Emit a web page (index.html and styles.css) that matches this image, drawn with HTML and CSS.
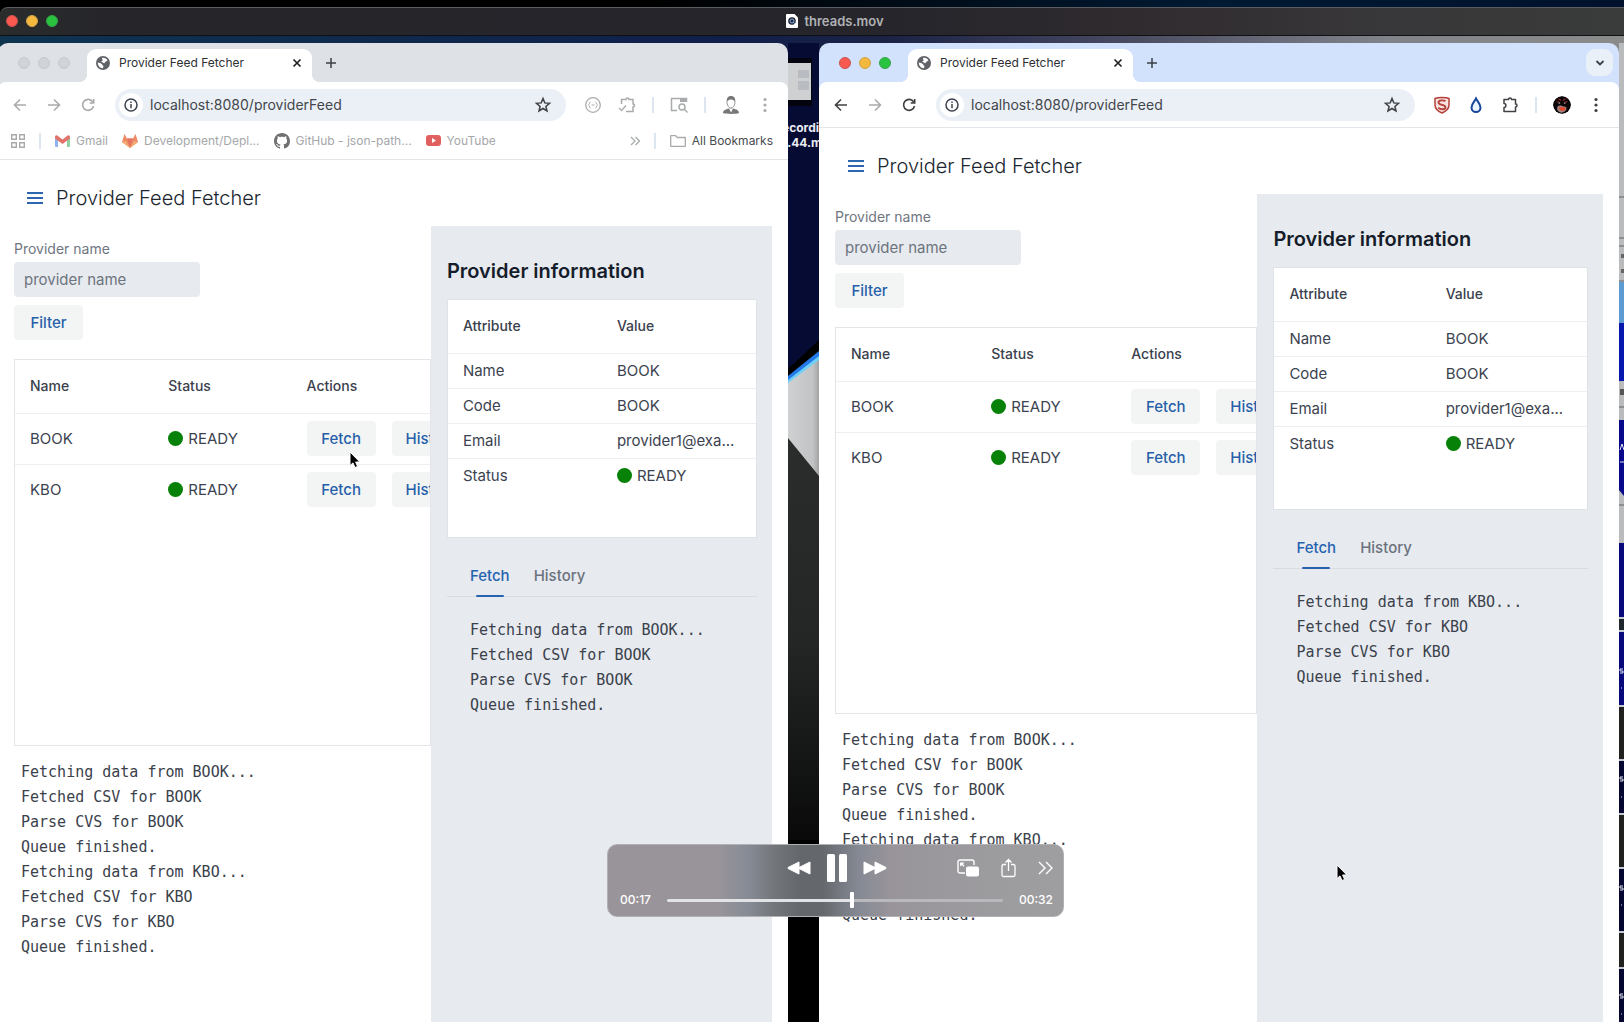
FILE: index.html
```html
<!DOCTYPE html>
<html lang="en">
<head>
<meta charset="utf-8">
<title>threads.mov</title>
<link rel="stylesheet" href="styles.css">
</head>
<body>
<svg class="defs" aria-hidden="true">
  <symbol id="i-back" viewBox="0 0 18 18"><path d="M15 9H4M9 3.500 3.500 9 9 14.500" fill="none" stroke="currentColor" stroke-width="1.600"/></symbol>
  <symbol id="i-fwd" viewBox="0 0 18 18"><path d="M3 9h11M9 3.500 14.500 9 9 14.500" fill="none" stroke="currentColor" stroke-width="1.600"/></symbol>
  <symbol id="i-reload" viewBox="0 0 18 18"><path d="M13.800 6A5.500 5.500 0 1 0 14.500 10M14.700 3v4h-4" fill="none" stroke="currentColor" stroke-width="1.600"/></symbol>
  <symbol id="i-info" viewBox="0 0 18 18"><circle cx="9" cy="9" r="6" fill="none" stroke="currentColor" stroke-width="1.500"/><path d="M9 8v4.200M9 5.500v1.500" stroke="currentColor" stroke-width="1.500"/></symbol>
  <symbol id="i-star" viewBox="0 0 18 18"><path d="m9 2.500 1.800 4.400 4.700.4-3.600 3.100 1.100 4.600-4-2.500-4 2.500 1.100-4.600L2.500 7.300l4.700-.4z" fill="none" stroke="currentColor" stroke-width="1.500"/></symbol>
  <symbol id="i-globe" viewBox="0 0 16 16"><circle cx="8" cy="8" r="8" fill="#5f6368"/><path d="M2 7.500c2 .2 3 .8 4.500 1.500 1 .6.800 1.700 1.800 2.200.5.600 0 1.800-.5 2.800C4.500 14 2 11 2 7.500zM7 2.200c2.500-.5 5 .7 6.200 2.800-1.700 0-1.200 1.500-2.700 1.700-.5.800-.2 1.800-1.500 1.600-1-.4-1.300-1.400-2.600-1.300C5.500 6.500 6.500 5.500 7.500 5 8.500 4.500 6 3.500 7 2.200z" fill="#fff"/></symbol>
  <symbol id="i-close" viewBox="0 0 12 12"><path d="m2.500 2.500 7 7m0-7-7 7" stroke="currentColor" stroke-width="1.700"/></symbol>
  <symbol id="i-plus" viewBox="0 0 12 12"><path d="M6 1v10M1 6h10" stroke="currentColor" stroke-width="1.500"/></symbol>
  <symbol id="i-puzzle" viewBox="0 0 18 18"><path d="M3 3.500h4.500c0-2 3-2 3 0h4V8c2 0 2 3 0 3v4.500H3v-4c2.500 0 2.500-4 0-4z" fill="none" stroke="currentColor" stroke-width="1.500" stroke-linejoin="round"/></symbol>
  <symbol id="i-puzzle-check" viewBox="0 0 18 18"><path d="M3.500 8V3.500H8c0-2 3-2 3 0h4V8c2 0 2 3 0 3v4.500H8" fill="none" stroke="currentColor" stroke-width="1.500"/><path d="m1 12 2.500 2.500L8 9.500" fill="none" stroke="currentColor" stroke-width="1.400"/></symbol>
  <symbol id="i-menu" viewBox="0 0 18 18"><g fill="currentColor"><circle cx="9" cy="3.500" r="1.600"/><circle cx="9" cy="9" r="1.600"/><circle cx="9" cy="14.500" r="1.600"/></g></symbol>
  <symbol id="i-burger" viewBox="0 0 16 16"><path d="M0 3h16M0 8h16M0 13h16" stroke="currentColor" stroke-width="2"/></symbol>
  <symbol id="i-cursor" viewBox="0 0 12 18"><path d="M1 1v13.500l3-2.600 2 4.600 2.600-1.100-2-4.400h4.200z" fill="#000" stroke="#fff" stroke-width="1"/></symbol>
</svg>

<header class="titlebar">
  <div class="lights"><i class="dot red"></i><i class="dot yellow"></i><i class="dot green"></i></div>
  <div class="file">
    <svg width="12" height="14" viewBox="0 0 12 14"><path d="M1 0h7.500L12 3.500V13a1 1 0 0 1-1 1H1a1 1 0 0 1-1-1V1a1 1 0 0 1 1-1z" fill="#fff"/><circle cx="6" cy="7" r="3.800" fill="#223"/><circle cx="6" cy="7" r="2" fill="none" stroke="#7fb0e6"/><path d="m7 8 2 2" stroke="#7fb0e6"/></svg>
    <span>threads.mov</span>
  </div>
</header>

<main class="desktop">
  <section class="window left inactive">
    <div class="tabstrip">
      <div class="lights"><i class="dot"></i><i class="dot"></i><i class="dot"></i></div>
      <div class="tab"><svg class="fav"><use href="#i-globe"/></svg><span class="tab-title">Provider Feed Fetcher</span><button class="icon-btn" aria-label="Close tab"><svg width="12" height="12"><use href="#i-close"/></svg></button></div>
      <button class="icon-btn new-tab" aria-label="New tab"><svg width="12" height="12"><use href="#i-plus"/></svg></button>
    </div>
    <div class="chrome">
      <div class="toolbar">
        <button class="icon-btn dim" aria-label="Back"><svg class="ic"><use href="#i-back"/></svg></button>
        <button class="icon-btn dim" aria-label="Forward"><svg class="ic"><use href="#i-fwd"/></svg></button>
        <button class="icon-btn dim" aria-label="Reload"><svg class="ic"><use href="#i-reload"/></svg></button>
        <div class="omnibox"><span class="info"><svg class="ic"><use href="#i-info"/></svg></span><input class="url" aria-label="Address" value="localhost:8080/providerFeed"><button class="icon-btn" aria-label="Bookmark"><svg class="ic"><use href="#i-star"/></svg></button></div>
        <button class="icon-btn dim" aria-label="JSON viewer"><svg class="ic" viewBox="0 0 18 18"><circle cx="9" cy="9" r="7.300" fill="none" stroke="currentColor" stroke-width="1.300"/><path d="M6.500 6c-1.500 0-.5 2.500-2 3 1.500.5.500 3 2 3M11.500 6c1.500 0 .5 2.500 2 3-1.500.5-.5 3-2 3M7.500 9h3" fill="none" stroke="currentColor"/></svg></button>
        <button class="icon-btn dim" aria-label="Extensions"><svg class="ic"><use href="#i-puzzle-check"/></svg></button>
        <i class="divider"></i>
        <button class="icon-btn dim" aria-label="Search tabs"><svg class="ic" viewBox="0 0 18 18"><path d="M7 14.500H1.500v-12h15V6" fill="none" stroke="currentColor" stroke-width="1.500"/><path d="M10 2h7v4h-7z" fill="currentColor"/><circle cx="12" cy="11" r="3" fill="none" stroke="currentColor" stroke-width="1.500"/><path d="m14 13 3.500 3.500" stroke="currentColor" stroke-width="1.500"/></svg></button>
        <i class="divider"></i>
        <button class="icon-btn" aria-label="Profile"><svg class="ic" viewBox="0 0 18 18"><path d="M1 17c0-3 3-3.500 6-4.500h4c3 1 6 1.500 6 4.500-3 1.200-13 1.200-16 0z" fill="#777"/><path d="m7 12.500 2 4 2-4z" fill="#fff"/><path d="M5 5.500c0 3.500 1.500 6.500 4 6.500s4-3 4-6.500" fill="#fff" stroke="#999"/><path d="M4.800 6.500C4.500 2 6 0 9 0s4.700 2 4.200 6.500C12.500 4 11 4 9 3.500 7 4 5.500 4 4.800 6.500z" fill="#777"/></svg></button>
        <button class="icon-btn dim" aria-label="Menu"><svg class="ic"><use href="#i-menu"/></svg></button>
      </div>
      <nav class="bookmarks">
        <svg class="apps" width="14" height="14" viewBox="0 0 14 14"><path d="M.7.700h4.600v4.600H.7zM8.700.700h4.600v4.600H8.700zM.7 8.700h4.600v4.600H.7zM8.700 8.700h4.600v4.600H8.700z" fill="none" stroke="#aaa" stroke-width="1.400"/></svg>
        <i class="divider"></i>
        <a href="#"><svg width="15" height="12" viewBox="0 0 15 12"><path d="M0 2v9a1 1 0 0 0 1 1h2V5z" fill="#8fb4ee"/><path d="M15 2v9a1 1 0 0 1-1 1h-2V5z" fill="#8fd0a0"/><path d="M0 2C0 0 2 0 3 1l4.500 3.500L12 1c1-1 3-1 3 1v1.500L7.500 9 0 3.500z" fill="#e2736b"/></svg>Gmail</a>
        <a href="#"><svg width="16" height="14" viewBox="0 0 16 14"><path d="M2.500 0 5 4.500h6L13.500 0 16 8l-8 6-8-6z" fill="#ee8a68"/><path d="M5 4.500h6L8 14z" fill="#e57560"/><path d="m0 8 8 6-4-7z" fill="#f5ad70"/><path d="m16 8-8 6 4-7z" fill="#f5ad70"/></svg>Development/Depl...</a>
        <a href="#"><svg width="16" height="16" viewBox="0 0 16 16"><path fill="#6f6f72" d="M8 0C3.580 0 0 3.580 0 8c0 3.540 2.290 6.530 5.470 7.590.4.070.55-.17.55-.38 0-.19-.01-.82-.01-1.490-2.010.37-2.530-.49-2.690-.94-.09-.23-.48-.94-.82-1.130-.28-.15-.68-.52-.01-.53.63-.01 1.080.58 1.230.82.72 1.210 1.870.87 2.330.66.07-.52.28-.87.51-1.070-1.780-.2-3.640-.89-3.640-3.950 0-.87.31-1.590.82-2.150-.08-.2-.36-1.020.08-2.120 0 0 .67-.21 2.200.82.64-.18 1.320-.27 2-.27s1.360.09 2 .27c1.530-1.040 2.200-.82 2.200-.82.44 1.100.16 1.920.08 2.120.51.56.82 1.270.82 2.150 0 3.070-1.870 3.750-3.650 3.950.29.25.54.73.54 1.480 0 1.070-.01 1.930-.01 2.200 0 .21.15.46.55.38A8.010 8.010 0 0 0 16 8c0-4.420-3.580-8-8-8z"/></svg>GitHub - json-path...</a>
        <a href="#"><svg width="15" height="11" viewBox="0 0 15 11"><rect width="15" height="11" rx="3" fill="#e0605f"/><path d="m6 3 4 2.500L6 8z" fill="#fff"/></svg>YouTube</a>
        <button class="icon-btn dim more" aria-label="More bookmarks"><svg width="10" height="10" viewBox="0 0 10 10"><path d="m1 1 4 4-4 4M5.500 1l4 4-4 4" fill="none" stroke="currentColor" stroke-width="1.300"/></svg></button>
        <i class="divider"></i>
        <a href="#" class="all"><svg width="16" height="12" viewBox="0 0 16 12"><path d="M.7 11.300V.7h5l1.600 1.800h8v8.800z" fill="none" stroke="#aaa" stroke-width="1.300" stroke-linejoin="round"/></svg>All Bookmarks</a>
      </nav>
    </div>
    <div class="app">
      <div class="app-head"><button class="icon-btn burger" aria-label="Toggle menu"><svg width="16" height="16"><use href="#i-burger"/></svg></button><h1>Provider Feed Fetcher</h1></div>
      <div class="split">
        <div class="providers">
          <label for="name-a">Provider name</label>
          <input id="name-a" class="field" placeholder="provider name">
          <button class="btn">Filter</button>
          <div class="grid-box">
            <table>
              <thead><tr><th>Name</th><th>Status</th><th>Actions</th></tr></thead>
              <tbody>
                <tr><td>BOOK</td><td><span class="status">READY</span></td><td><div class="actions"><button class="btn">Fetch</button><button class="btn">History</button></div></td></tr>
                <tr><td>KBO</td><td><span class="status">READY</span></td><td><div class="actions"><button class="btn">Fetch</button><button class="btn">History</button></div></td></tr>
              </tbody>
            </table>
          </div>
          <pre class="log">Fetching data from BOOK...
Fetched CSV for BOOK
Parse CVS for BOOK
Queue finished.
Fetching data from KBO...
Fetched CSV for KBO
Parse CVS for KBO
Queue finished.</pre>
        </div>
        <aside class="panel">
          <h2>Provider information</h2>
          <div class="info-box">
            <table>
              <thead><tr><th>Attribute</th><th>Value</th></tr></thead>
              <tbody>
                <tr><td>Name</td><td>BOOK</td></tr>
                <tr><td>Code</td><td>BOOK</td></tr>
                <tr><td>Email</td><td>provider1@exa...</td></tr>
                <tr><td>Status</td><td><span class="status">READY</span></td></tr>
              </tbody>
            </table>
          </div>
          <div class="tabs" role="tablist"><button role="tab" class="tab-btn selected" aria-selected="true">Fetch</button><button role="tab" class="tab-btn" aria-selected="false">History</button></div>
          <pre class="log">Fetching data from BOOK...
Fetched CSV for BOOK
Parse CVS for BOOK
Queue finished.</pre>
        </aside>
      </div>
    </div>
  </section>

  <div class="gap">
    <svg class="wallpaper" width="31" height="979" viewBox="0 43 31 979">
      <defs>
        <linearGradient id="g-dark" x1="0" y1="438" x2="0" y2="850" gradientUnits="userSpaceOnUse"><stop offset="0" stop-color="#2b2c2c"/><stop offset=".5" stop-color="#242626"/><stop offset="1" stop-color="#080808"/></linearGradient>
        <linearGradient id="g-grey"><stop offset="0" stop-color="#cfd0d2"/><stop offset=".8" stop-color="#c2c3c4"/><stop offset="1" stop-color="#a2a3a5"/></linearGradient>
      </defs>
      <rect y="43" width="31" height="979" fill="#060b33"/>
      <rect y="58" width="24" height="48" fill="#03040e"/>
      <rect y="63" width="23" height="37" fill="#cfd0d1"/>
      <path d="M10 70h11v8H10zM10 81h11v9H10z" fill="#b9bdc2"/>
      <path d="M0 369 31 340V380H0z" fill="#000"/>
      <path d="M0 376 31 351V370L0 392z" fill="#2479e8"/>
      <path d="M0 380 31 356V370L0 392z" fill="#6fd0fa"/>
      <path d="M0 383 31 360V480H0z" fill="url(#g-grey)"/>
      <path d="M0 438 31 476V840H0z" fill="url(#g-dark)"/>
      <rect y="840" width="31" height="182" fill="#000"/>
    </svg>
    <span class="file-label">ecording<br>1.44.mov</span>
  </div>

  <section class="window right">
    <div class="tabstrip">
      <div class="lights"><i class="dot red"></i><i class="dot yellow"></i><i class="dot green"></i></div>
      <div class="tab"><svg class="fav"><use href="#i-globe"/></svg><span class="tab-title">Provider Feed Fetcher</span><button class="icon-btn" aria-label="Close tab"><svg width="12" height="12"><use href="#i-close"/></svg></button></div>
      <button class="icon-btn new-tab" aria-label="New tab"><svg width="12" height="12"><use href="#i-plus"/></svg></button>
      <button class="icon-btn tab-search" aria-label="Search tabs"><svg width="10" height="10" viewBox="0 0 10 10"><path d="m1.500 3 3.500 3.500L8.500 3" fill="none" stroke="currentColor" stroke-width="1.800"/></svg></button>
    </div>
    <div class="chrome">
      <div class="toolbar">
        <button class="icon-btn" aria-label="Back"><svg class="ic"><use href="#i-back"/></svg></button>
        <button class="icon-btn dim" aria-label="Forward"><svg class="ic"><use href="#i-fwd"/></svg></button>
        <button class="icon-btn" aria-label="Reload"><svg class="ic"><use href="#i-reload"/></svg></button>
        <div class="omnibox"><span class="info"><svg class="ic"><use href="#i-info"/></svg></span><input class="url" aria-label="Address" value="localhost:8080/providerFeed"><button class="icon-btn" aria-label="Bookmark"><svg class="ic"><use href="#i-star"/></svg></button></div>
        <button class="icon-btn" aria-label="Shield"><svg class="ic" viewBox="0 0 18 18"><path d="M2 2.500C5 1 13 1 16 2.500V9c0 4-3.500 6.500-7 8-3.500-1.500-7-4-7-8z" fill="#f6e3e0" stroke="#b5413b" stroke-width="1.500"/><path d="M12.500 5.200c-2-1.300-7-1.200-7 1.300 0 3 7 1.800 7 4.700 0 2.500-4.500 2.600-7.200.6" fill="none" stroke="#b5413b" stroke-width="1.900"/></svg></button>
        <button class="icon-btn" aria-label="Drop"><svg class="ic" viewBox="0 0 18 18"><path d="M9 2.500c1.500 3 4.500 5.500 4.500 9a4.500 4.500 0 0 1-9 0c0-3.500 3-6 4.500-9z" fill="#eaf6ff" stroke="#17479b" stroke-width="2"/></svg></button>
        <button class="icon-btn" aria-label="Extensions"><svg class="ic"><use href="#i-puzzle"/></svg></button>
        <i class="divider"></i>
        <button class="icon-btn" aria-label="Profile"><svg class="ic avatar" viewBox="0 0 20 20"><circle cx="10" cy="10" r="10" fill="#0b0708"/><path d="m4 6 4 1.500M16 6l-4 1.500M6 3l3 2M14 3l-3 2" stroke="#8d2a28" stroke-width="1.200"/><circle cx="7" cy="8" r="1" fill="#777"/><circle cx="13" cy="8" r="1" fill="#777"/><path d="M4.500 14c0-3.500 3-4 5.500-3s5.500 0 5 3-3 4.500-5.500 4.500-5-2-5-4.500z" fill="#9c8583"/><path d="M6.500 13c2-1.500 5 0 7.500-.5 0 3-2 4.500-4 4s-3.500-1.500-3.500-3.500z" fill="#e2492f"/></svg></button>
        <button class="icon-btn" aria-label="Menu"><svg class="ic"><use href="#i-menu"/></svg></button>
      </div>
    </div>
    <div class="app">
      <div class="app-head"><button class="icon-btn burger" aria-label="Toggle menu"><svg width="16" height="16"><use href="#i-burger"/></svg></button><h1>Provider Feed Fetcher</h1></div>
      <div class="split">
        <div class="providers">
          <label for="name-b">Provider name</label>
          <input id="name-b" class="field" placeholder="provider name">
          <button class="btn">Filter</button>
          <div class="grid-box">
            <table>
              <thead><tr><th>Name</th><th>Status</th><th>Actions</th></tr></thead>
              <tbody>
                <tr><td>BOOK</td><td><span class="status">READY</span></td><td><div class="actions"><button class="btn">Fetch</button><button class="btn">History</button></div></td></tr>
                <tr><td>KBO</td><td><span class="status">READY</span></td><td><div class="actions"><button class="btn">Fetch</button><button class="btn">History</button></div></td></tr>
              </tbody>
            </table>
          </div>
          <pre class="log">Fetching data from BOOK...
Fetched CSV for BOOK
Parse CVS for BOOK
Queue finished.
Fetching data from KBO...
Fetched CSV for KBO
Parse CVS for KBO
Queue finished.</pre>
        </div>
        <aside class="panel">
          <h2>Provider information</h2>
          <div class="info-box">
            <table>
              <thead><tr><th>Attribute</th><th>Value</th></tr></thead>
              <tbody>
                <tr><td>Name</td><td>BOOK</td></tr>
                <tr><td>Code</td><td>BOOK</td></tr>
                <tr><td>Email</td><td>provider1@exa...</td></tr>
                <tr><td>Status</td><td><span class="status">READY</span></td></tr>
              </tbody>
            </table>
          </div>
          <div class="tabs" role="tablist"><button role="tab" class="tab-btn selected" aria-selected="true">Fetch</button><button role="tab" class="tab-btn" aria-selected="false">History</button></div>
          <pre class="log">Fetching data from KBO...
Fetched CSV for KBO
Parse CVS for KBO
Queue finished.</pre>
        </aside>
      </div>
    </div>
  </section>

  <svg class="edge" width="5" height="979" viewBox="0 43 5 979">
    <rect y="43" width="5" height="979" fill="#b9bbbc"/>
    <path d="M0 197h5M0 238h5M0 246h5M0 281h5M0 407h5M0 505h5" stroke="#8c8e90" stroke-width="2"/>
    <path d="M2 256h3M2 271h3" stroke="#666" stroke-width="4"/>
    <rect y="282" width="5" height="41" fill="#5f9bd3"/>
    <rect y="323" width="5" height="58" fill="#0517ad"/>
    <path d="M1 392h4" stroke="#555" stroke-width="6"/>
    <path d="M0 420h5v76L0 490z" fill="#07088a"/>
    <path d="M1 450l2-6 2 6M1 462h4M2 560l2-3v9" fill="none" stroke="#dfe3ee"/>
    <rect y="543" width="5" height="479" fill="#07087a"/>
    <rect y="617" width="5" height="15" fill="#20262e"/>
    <rect y="705" width="5" height="54" fill="#20211f"/>
    <rect y="759" width="5" height="263" fill="#05062f"/>
    <rect y="813" width="5" height="54" fill="#20211f"/>
    <rect y="932" width="5" height="35" fill="#20211f"/>
    <path d="M0 618h5M0 631h5M0 706h5M0 760h5M0 814h5M0 868h5M0 932h5M0 968h5" stroke="#c3c9d2" stroke-width="2"/>
    <path d="M4 669H1v2h3v2H1M4 777H1v2h3v2H1M4 886H1v2h3v2H1M4 994H1v2h3v2H1M2 688h1M2 797h1M2 905h1M2 1014h1" fill="none" stroke="#dfe3ee"/>
  </svg>

  <svg class="cursor one" width="12" height="18"><use href="#i-cursor"/></svg>
  <svg class="cursor two" width="12" height="18"><use href="#i-cursor"/></svg>

  <div class="player">
    <div class="controls">
      <div class="transport">
        <button class="icon-btn" aria-label="Rewind"><svg width="24" height="14" viewBox="0 0 24 14"><path d="M12 1v12L1 7.500v-1zM23 1v12L12 7.500v-1z" fill="#fff" stroke="#fff" stroke-linejoin="round"/></svg></button>
        <button class="icon-btn" aria-label="Pause"><svg width="20" height="28" viewBox="0 0 20 28"><rect width="8" height="28" rx="1.500" fill="#fff"/><rect x="12" width="8" height="28" rx="1.500" fill="#fff"/></svg></button>
        <button class="icon-btn" aria-label="Fast forward"><svg width="24" height="14" viewBox="0 0 24 14"><path d="M1 1v12l11-5.500v-1zM12 1v12l11-5.500v-1z" fill="#fff" stroke="#fff" stroke-linejoin="round"/></svg></button>
      </div>
      <div class="extras">
        <button class="icon-btn" aria-label="Picture in picture"><svg width="22" height="18" viewBox="0 0 22 18"><path d="M8 14H3a2 2 0 0 1-2-2V3a2 2 0 0 1 2-2h12a2 2 0 0 1 2 2v3" fill="none" stroke="#fff" stroke-width="1.400"/><rect x="9" y="7.500" width="13" height="10" rx="2" fill="#fff"/><path d="M3 3.500h4.500L6 5l1.500 2-1 .7L5 6 3 7.500z" fill="#fff"/></svg></button>
        <button class="icon-btn" aria-label="Share"><svg width="15" height="20" viewBox="0 0 15 20"><path d="M5 6.500H2.500A1.500 1.500 0 0 0 1 8v9a1.500 1.500 0 0 0 1.500 1.500h10A1.500 1.500 0 0 0 14 17V8a1.500 1.500 0 0 0-1.500-1.500H10M7.500 13V1.500M4.500 4.500l3-3 3 3" fill="none" stroke="#fff" stroke-width="1.300"/></svg></button>
        <button class="icon-btn" aria-label="More"><svg width="15" height="14" viewBox="0 0 15 14"><path d="m1 1 6 6-6 6M8 1l6 6-6 6" fill="none" stroke="#fff" stroke-width="1.400"/></svg></button>
      </div>
    </div>
    <div class="timeline"><span>00:17</span><input type="range" min="0" max="100" value="55" aria-label="Position"><span>00:32</span></div>
  </div>
</main>
</body>
</html>
```
FILE: styles.css
```css
* { box-sizing: border-box; }

body {
  margin: 0;
  min-height: 100vh;
  display: flex;
  flex-direction: column;
  padding-top: 7px;
  background: linear-gradient(90deg, #000 40%, #001a33 75%, #00112d);
  font-family: Inter, "Liberation Sans", sans-serif;
  color: #3c4350;
  overflow-x: hidden;
}

.defs { display: none; }
svg { display: block; }
i { display: block; }

button, input {
  font: inherit;
  color: inherit;
  border: 0;
  padding: 0;
  margin: 0;
  background: none;
}

.icon-btn { display: flex; flex: none; align-items: center; justify-content: center; color: #3e4043; }
.dim { color: #a9abad; }
.ic { width: 18px; height: 18px; }

/* Video window title bar */
.titlebar {
  display: grid;
  grid-template-columns: 64px 1fr;
  align-items: center;
  height: 29px;
  padding: 0 18px 2px 0;
  border-top: 1px solid #5a5c62;
  border-bottom: 1px solid #101116;
  border-top-left-radius: 8px;
  background: linear-gradient(90deg, #2a2c2c 0, #25252a 7%, #25252b 55%, #302b2f 70%, #383739 85%, #3a3b3b);
}
.lights { display: flex; gap: 8px; }
.dot { width: 12px; height: 12px; border-radius: 50%; background: #d0d4d8; border: 1px solid #c6cacd; }
.dot.red { background: #f9594f; border-color: #c9544f; }
.dot.yellow { background: #f4b83c; border-color: #d0a24b; }
.dot.green { background: #2ac340; border-color: #35a347; }
.titlebar .lights { padding-left: 6px; }
.file { display: flex; justify-content: center; align-items: center; gap: 6px; font-size: 13px; font-weight: 600; line-height: 16px; color: #b1b1b5; }

/* Desktop behind the browser windows */
.desktop {
  position: relative;
  flex: 1;
  display: grid;
  grid-template-columns: minmax(0, 788fr) 31px minmax(0, 800fr) 5px;
  padding-top: 7px;
  background: linear-gradient(90deg, #0e3450, #101f4a 45%, #1c2346 55%, #4a4c62 70%, #808289 85%, #8b8b8b);
}
.window { display: flex; flex-direction: column; min-width: 0; border-radius: 10px 10px 0 0; background: #d3e2fc; }
.window.left { margin-left: -2px; background: #dee2e6; }
.gap { position: relative; overflow: hidden; background: #000; }
.file-label { position: absolute; top: 77px; left: -6px; font-size: 12px; font-weight: 700; line-height: 15px; color: #e9ebf2; }

.tabstrip { display: flex; align-items: center; height: 39px; padding: 0 6px 0 20px; }
.tab {
  position: relative;
  display: flex;
  align-items: center;
  gap: 9px;
  align-self: flex-end;
  width: 225px;
  height: 33px;
  margin-left: 17px;
  padding: 0 9px 6px;
  border-radius: 9px 9px 0 0;
  background: #fff;
  font-size: 12px;
  line-height: 16px;
  color: #2d2f33;
}
.tab::before, .tab::after { content: ""; position: absolute; bottom: 0; width: 8px; height: 8px; }
.tab::before { left: -8px; background: radial-gradient(circle at 0 0, transparent 8px, #fff 8px); }
.tab::after { right: -8px; background: radial-gradient(circle at 100% 0, transparent 8px, #fff 8px); }
.fav { width: 14px; height: 14px; flex: none; }
.tab-title { flex: 1; white-space: nowrap; }
.tab .icon-btn { color: #222; }
.new-tab { margin-left: 13px; }
.tab-search { width: 27px; height: 27px; margin-left: auto; border-radius: 9px; background: #eaf0f8; }

.chrome { background: #fff; border-bottom: 1px solid #e3e5e8; border-radius: 8px 8px 0 0; }
.toolbar { display: flex; align-items: center; gap: 16px; height: 45px; padding: 0 14px 0 13px; }
.omnibox { flex: 1; min-width: 0; display: flex; align-items: center; gap: 7px; height: 32px; margin: 0 2px; padding: 0 14px 0 4px; border-radius: 16px; background: #ebf0f7; }
.info { display: flex; align-items: center; justify-content: center; flex: none; width: 24px; height: 24px; border-radius: 50%; background: #fff; }
.url { flex: 1; min-width: 0; font-size: 14px; line-height: 20px; color: #43464a; }
.divider { width: 2px; height: 16px; flex: none; background: #dde5f1; }
.avatar { border-radius: 50%; }

.bookmarks { display: flex; align-items: center; height: 32px; padding: 0 15px 5px 13px; gap: 14px; font-size: 12px; line-height: 16px; }
.bookmarks a { display: flex; align-items: center; gap: 6px; color: #a5a7aa; text-decoration: none; white-space: nowrap; }
.bookmarks .all { color: #484b4f; }
.more { margin-left: auto; }

/* Feed fetcher application */
.app { flex: 1; display: flex; flex-direction: column; padding: 0 16px; background: #fff; }
.app-head { display: flex; align-items: center; gap: 13px; height: 66px; padding: 10px 13px 0; }
.burger { color: #2d66ae; }
h1 { margin: 0; font-size: 20px; font-weight: 300; line-height: 26px; color: #20262f; white-space: nowrap; }
.split { flex: 1; display: grid; grid-template-columns: minmax(0, 55fr) minmax(0, 45fr); }
.providers { display: flex; flex-direction: column; align-items: flex-start; padding-top: 14px; min-width: 0; }
label { font-size: 14px; line-height: 18px; color: #6f7680; }
.field { width: 186px; height: 35px; margin: 4px 0 8px; padding: 0 10px; border-radius: 4px; background: #e7eaee; font-size: 15px; }
.field::placeholder { color: #6d747f; opacity: 1; }
.btn { flex: none; min-width: 69px; height: 35px; padding: 0 14px; border-radius: 4px; background: #f3f5f5; color: #275fa9; font-size: 15px; font-weight: 500; }
.grid-box { width: 100%; height: 387px; margin-top: 19px; border: 1px solid #e3e5e8; overflow: hidden; }

table { width: 100%; table-layout: fixed; border-collapse: collapse; font-size: 15px; line-height: 20px; }
th, td { padding: 0 0 0 15px; text-align: left; white-space: nowrap; border-bottom: 1px solid #eeeff1; }
th { height: 53px; font-size: 14px; font-weight: 500; color: #3a414d; }
tbody tr:last-child td { border-bottom: 0; }
.grid-box td { height: 51px; }
.info-box td { height: 35px; }
.actions { display: flex; gap: 16px; }
.status { display: flex; align-items: center; gap: 5px; }
.status::before { content: ""; width: 15px; height: 15px; border-radius: 50%; background: #078107; }

.log { margin: 14px 0 0; padding-left: 7px; font: 15px/25px "DejaVu Sans Mono", "Liberation Mono", monospace; color: #3a414b; }

.panel { min-width: 0; padding: 32px 15px 0 16px; background: #e7eaef; }
h2 { margin: 0 0 15px; font-size: 20px; font-weight: 600; line-height: 26px; color: #161d2a; white-space: nowrap; }
.info-box { height: 239px; border: 1px solid #dfe2e6; background: #fff; }
.right .info-box { height: 243px; }
.tabs { display: flex; gap: 24px; height: 42px; margin-top: 17px; padding-left: 23px; border-bottom: 1px solid #d8dce2; font-size: 15px; font-weight: 500; }
.tab-btn { position: relative; color: #6c727d; }
.tab-btn.selected { color: #2563b0; }
.tab-btn.selected::after { content: ""; position: absolute; left: 6px; right: 6px; bottom: -1px; height: 2px; border-radius: 1px; background: #2563b0; }
.panel .log { margin-top: 21px; padding-left: 23px; }

/* Overlays: pointers and playback controls */
.cursor { position: absolute; }
.cursor.one { left: 349px; top: 415px; }
.cursor.two { left: 1336px; top: 828px; }
.player {
  position: absolute;
  left: calc(50% - 205px);
  bottom: 105px;
  width: 457px;
  padding: 9px 10px 8px 12px;
  border: 1px solid #b3b0b5;
  border-radius: 10px;
  background: linear-gradient(90deg, #99949a 24%, #868b95 31%, #74777c 36%, #64686c 42%, #64686c 47%, #858993 55%, #98949a 62%, #9b999d 75%, #9e9ea0);
  color: #fff;
}
.controls { display: grid; grid-template-columns: 1fr auto 1fr; align-items: center; }
.transport { grid-column: 2; display: flex; align-items: center; gap: 16px; }
.extras { display: flex; align-items: center; justify-content: flex-end; gap: 22px; }
.timeline { display: flex; align-items: center; gap: 16px; margin-top: 10px; font-size: 12px; font-weight: 500; line-height: 16px; }
input[type="range"] { flex: 1; min-width: 0; height: 16px; appearance: none; }
input[type="range"]::-webkit-slider-runnable-track { height: 3px; border-radius: 2px; background: linear-gradient(90deg, #e2e3e6 55%, #b9b8bc 55%); }
input[type="range"]::-webkit-slider-thumb { appearance: none; width: 4px; height: 16px; margin-top: -7px; border-radius: 1px; background: #fff; }
```
